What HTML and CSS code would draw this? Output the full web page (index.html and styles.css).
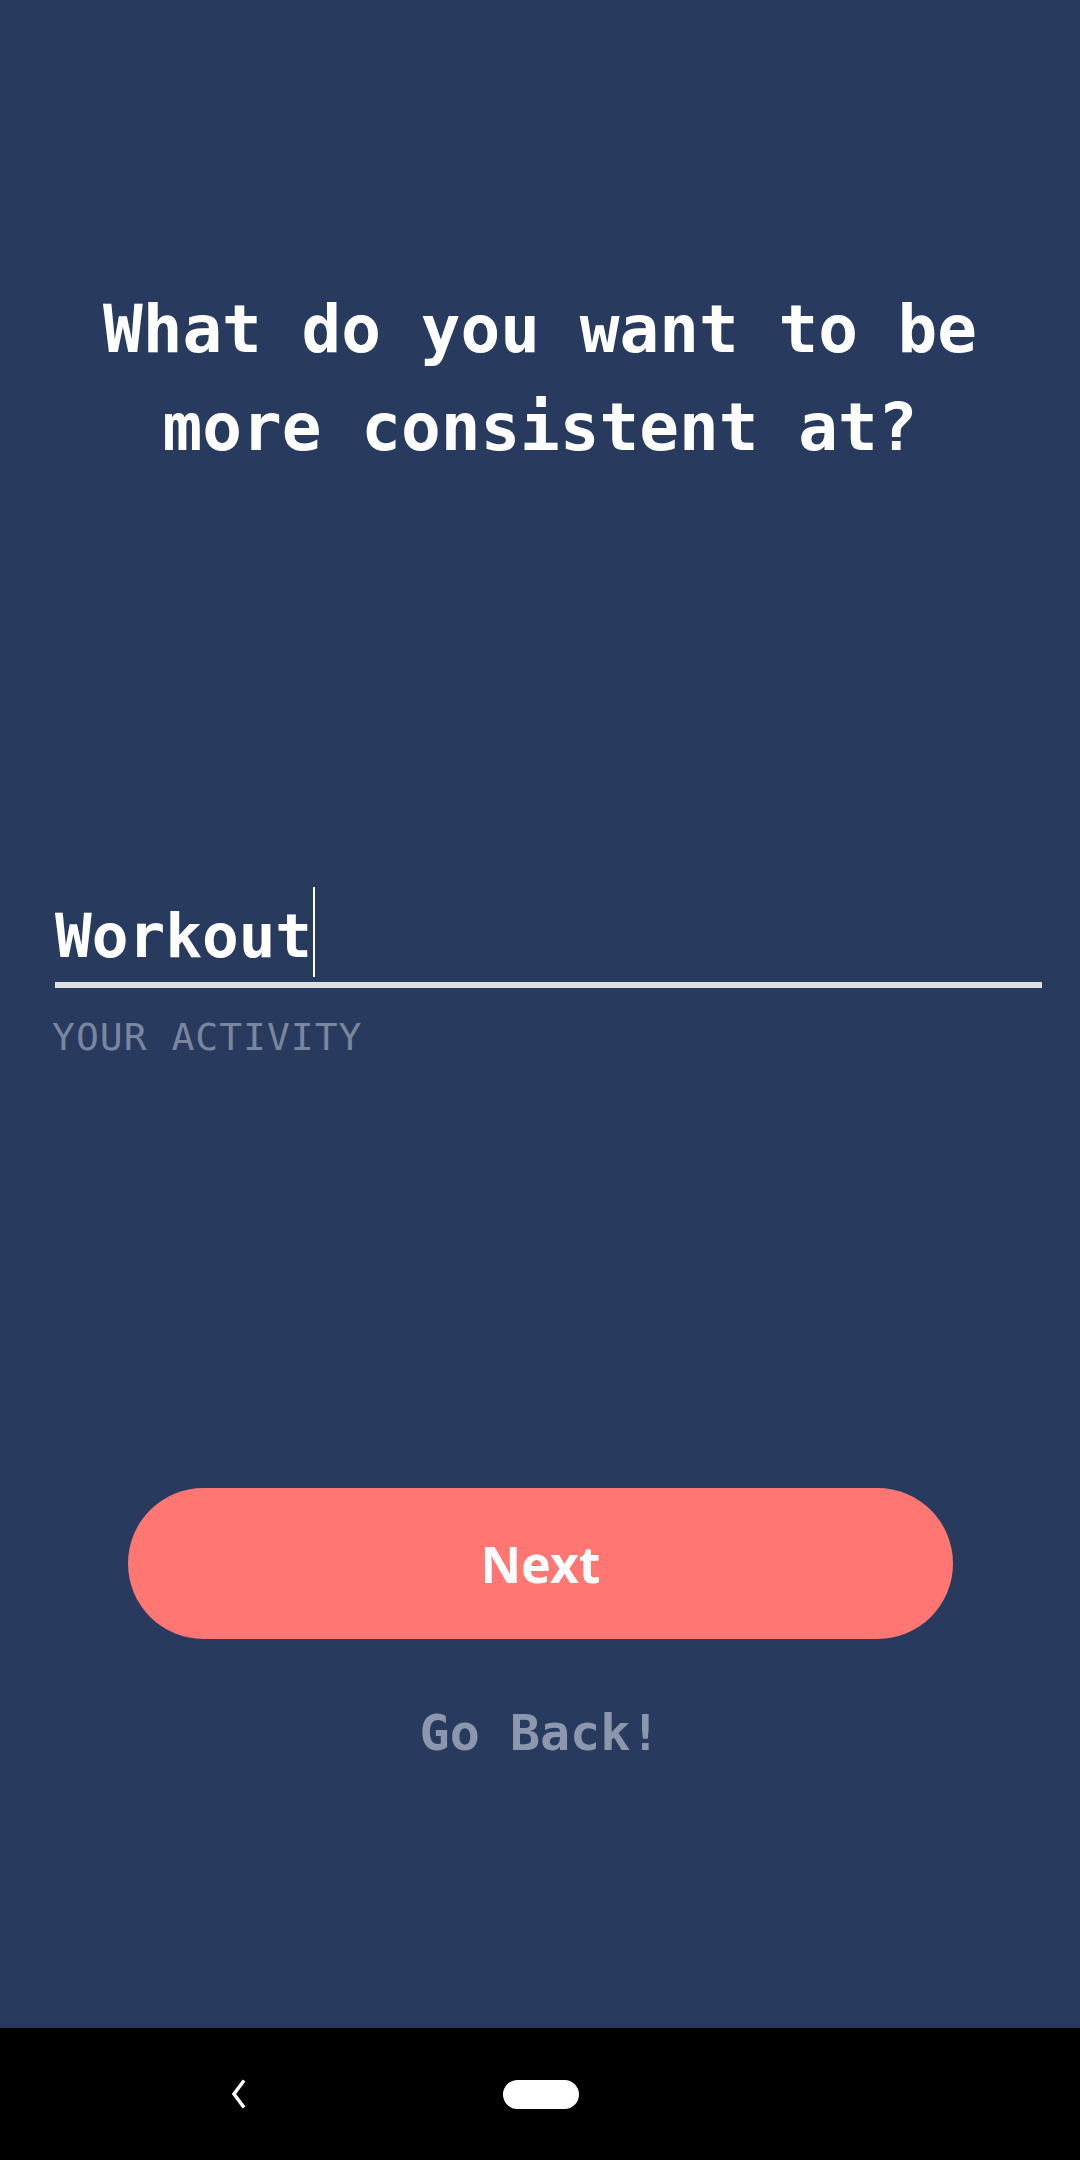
FILE: index.html
```html
<!DOCTYPE html>
<html>
<head>
<meta charset="utf-8">
<link rel="stylesheet" href="styles.css">
</head>
<body>
<div class="screen">
  <main class="content">
    <h1 class="title">What do you want to be<br>more consistent at?</h1>
    <div class="field">
      <div class="input-row">
        <span class="input-text">Workout</span>
        <span class="cursor"></span>
      </div>
      <div class="underline"></div>
      <div class="label">YOUR ACTIVITY</div>
    </div>
    <button class="next">Next</button>
    <div class="back">Go Back!</div>
  </main>
  <nav class="navbar">
    <svg class="nav-back" width="20" height="30" viewBox="0 0 20 30"><polyline points="15,1.5 5,15 15,28.5" fill="none" stroke="#fff" stroke-width="3.5"/></svg>
    <span class="nav-home"></span>
  </nav>
</div>
</body>
</html>
```

FILE: styles.css
```css
html, body {
  margin: 0;
  padding: 0;
  background: #283b5f;
}
.screen {
  width: 1080px;
  height: 2160px;
  display: flex;
  flex-direction: column;
}
.content {
  height: 2028px;
  background: #283b5f;
  display: flex;
  flex-direction: column;
}
.title {
  margin: 281px 0 0 0;
  font-family: "DejaVu Sans Mono", monospace;
  font-weight: bold;
  font-size: 66px;
  line-height: 98px;
  color: #ffffff;
  text-align: center;
}
.field {
  margin-top: 410px;
  padding-left: 55px;
}
.input-row {
  display: flex;
  align-items: flex-end;
  height: 90px;
}
.input-text {
  font-family: "DejaVu Sans Mono", monospace;
  font-weight: bold;
  font-size: 61px;
  line-height: 1;
  color: #ffffff;
  padding-bottom: 11px;
}
.cursor {
  width: 2px;
  height: 90px;
  background: #ffffff;
  margin-left: 1px;
}
.underline {
  margin-top: 5px;
  width: 987px;
  height: 6px;
  background: #e0e0e0;
}
.label {
  margin-top: 30px;
  margin-left: -3px;
  font-family: "DejaVu Sans Mono", monospace;
  font-size: 38px;
  line-height: 1;
  letter-spacing: 1px;
  color: #7a869f;
}
.next {
  margin: 432px 0 0 128px;
  width: 825px;
  height: 151px;
  border: none;
  border-radius: 76px;
  background: #ff7673;
  color: #ffffff;
  font-family: "Noto Sans", Roboto, sans-serif;
  font-weight: bold;
  font-size: 50px;
  padding: 0;
}
.back {
  margin-top: 69px;
  text-align: center;
  font-family: "DejaVu Sans Mono", monospace;
  font-weight: bold;
  font-size: 50px;
  line-height: 1;
  color: #8c97ad;
}
.navbar {
  height: 132px;
  background: #000000;
  display: flex;
  align-items: center;
}
.nav-back {
  margin-left: 229px;
}
.nav-home {
  margin-left: 254px;
  width: 76px;
  height: 29px;
  border-radius: 15px;
  background: #ffffff;
}
```
